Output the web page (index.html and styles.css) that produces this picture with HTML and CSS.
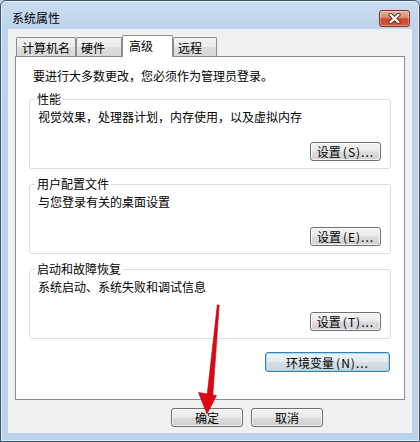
FILE: index.html
```html
<!DOCTYPE html>
<html lang="zh-CN">
<head>
<meta charset="utf-8">
<title>系统属性</title>
<link rel="stylesheet" href="styles.css">
</head>
<body>
<div class="window">
  <div class="titlebar">
    <span class="title">系统属性</span>
    <button class="close" aria-label="关闭">
      <svg width="13" height="11" viewBox="0 0 13 11">
        <path d="M2.5 1.8 L10.5 9.2 M10.5 1.8 L2.5 9.2" stroke="#6b2a1e" stroke-width="4" stroke-linecap="round" fill="none"/>
        <path d="M2.5 1.8 L10.5 9.2 M10.5 1.8 L2.5 9.2" stroke="#ffffff" stroke-width="2.2" stroke-linecap="round" fill="none"/>
      </svg>
    </button>
  </div>
  <div class="client">
    <div class="tabs">
      <div class="tab t1">计算机名</div>
      <div class="tab t2">硬件</div>
      <div class="tab selected">高级</div>
      <div class="tab t4">远程</div>
    </div>
    <div class="panel">
      <p class="intro">要进行大多数更改，您必须作为管理员登录。</p>
      <div class="group">
        <div class="legend">性能</div>
        <p class="desc">视觉效果，处理器计划，内存使用，以及虚拟内存</p>
        <div class="btnrow"><button class="btn btn-set">设置<span class="mn">(S)...</span></button></div>
      </div>
      <div class="group">
        <div class="legend">用户配置文件</div>
        <p class="desc">与您登录有关的桌面设置</p>
        <div class="btnrow"><button class="btn btn-set">设置<span class="mn">(E)...</span></button></div>
      </div>
      <div class="group">
        <div class="legend">启动和故障恢复</div>
        <p class="desc">系统启动、系统失败和调试信息</p>
        <div class="btnrow"><button class="btn btn-set">设置<span class="mn">(T)...</span></button></div>
      </div>
      <div class="envrow"><button class="btn btn-default btn-env">环境变量<span class="mn">(N)...</span></button></div>
    </div>
    <div class="dialog-buttons">
      <button class="btn btn-dlg">确定</button>
      <button class="btn btn-dlg">取消</button>
    </div>
  </div>
  <svg class="arrow" width="420" height="442" viewBox="0 0 420 442">
    <polygon points="217.3,305 219.2,305 212.6,398 206.8,398" fill="#e10612" stroke="#b3000a" stroke-width="0.6"/>
    <polygon points="198.5,392.5 216.5,395.5 207,414" fill="#e10612" stroke="#b3000a" stroke-width="0.6"/>
  </svg>
</div>
</body>
</html>
```

FILE: styles.css
```css
* { box-sizing: border-box; }

html, body {
  margin: 0;
  padding: 0;
  background: #bcd3ea;
}

body {
  font-family: "Noto Sans CJK SC", "Noto Sans", sans-serif;
  font-size: 12px;
  color: #000;
}

.window {
  position: relative;
  width: 420px;
  height: 442px;
  border: 1px solid #3f5369;
  border-radius: 6px 6px 0 0;
  padding: 0 7px 8px 7px;
  background: linear-gradient(to bottom, #c9dcf1 0px, #bed4ec 28px, #bcd2ea 100%);
  box-shadow: inset 0 0 0 1px rgba(255, 255, 255, 0.55);
}

.titlebar {
  height: 28px;
  padding: 6px 2px 0 4px;
  display: flex;
  align-items: center;
  justify-content: space-between;
}

.title {
  line-height: 14px;
  color: #000;
}

.close {
  width: 31px;
  height: 17px;
  margin-top: 1px;
  padding: 0;
  border: 1px solid #7b3326;
  border-radius: 3px;
  background: linear-gradient(to bottom, #eab1a3 0%, #dc8670 45%, #c9482d 52%, #d35a3c 100%);
  box-shadow: inset 0 0 0 1px rgba(255, 255, 255, 0.35);
  display: flex;
  align-items: center;
  justify-content: center;
}

.client {
  height: 404px;
  background: #f0f0f0;
  padding: 6px 7px 0 7px;
  display: flex;
  flex-direction: column;
}

.tabs {
  height: 22px;
  margin-bottom: -1px;
  padding-left: 1px;
  display: flex;
  align-items: flex-start;
  position: relative;
  z-index: 1;
}

.tab {
  height: 19px;
  margin-top: 2px;
  border: 1px solid #898c95;
  border-bottom: none;
  border-radius: 2px 2px 0 0;
  background: linear-gradient(to bottom, #f4f4f4 0%, #ececec 50%, #dedede 51%, #d8d8d8 100%);
  padding: 3px 0 0 5px;
  line-height: 14px;
  white-space: nowrap;
}

.t1 { width: 60px; }
.t2 { width: 46px; padding-left: 4px; }
.t4 { width: 44px; padding-left: 4px; }

.tab.selected {
  width: 51px;
  height: 22px;
  margin-top: 0;
  background: #fff;
  padding-left: 6px;
  padding-top: 3px;
}

.panel {
  height: 344px;
  background: #fff;
  border: 1px solid #898c95;
  padding: 12px 13px 0 13px;
  display: flex;
  flex-direction: column;
}

.intro {
  margin: 0 0 0 4px;
  line-height: 14px;
}

.group {
  height: 70px;
  margin-top: 15px;
  border: 1px solid #d5dfe5;
  border-radius: 3px;
  padding: 0 9px 0 8px;
  display: flex;
  flex-direction: column;
}

.intro + .group { margin-top: 16px; }

.legend {
  align-self: flex-start;
  margin: -8px 0 0 -3px;
  padding: 0 2px;
  background: #fff;
  line-height: 14px;
}

.desc {
  margin: 4px 0 0 0;
  line-height: 14px;
}

.btnrow {
  margin-top: 18px;
  display: flex;
  justify-content: flex-end;
}

.btn {
  height: 19px;
  padding: 0;
  border: 1px solid #707070;
  border-radius: 3px;
  background: linear-gradient(to bottom, #f2f2f2 0%, #ebebeb 48%, #dddddd 52%, #cfcfcf 100%);
  box-shadow: inset 0 0 0 1px rgba(255, 255, 255, 0.75);
  font-family: "Noto Sans CJK SC", "Noto Sans", sans-serif;
  font-size: 12px;
  line-height: 15px;
  color: #000;
  display: flex;
  align-items: center;
  justify-content: center;
}

.mn {
  letter-spacing: 1px;
  margin-left: 2px;
}

.btn-set { width: 71px; }

.envrow {
  margin-top: 13px;
  padding-right: 1px;
  display: flex;
  justify-content: flex-end;
}

.btn-env {
  width: 125px;
  height: 20px;
}

.btn-default {
  border-color: #3c7fb1;
  box-shadow: inset 0 0 0 1px rgba(140, 210, 240, 0.7);
  background: linear-gradient(to bottom, #eef4f8 0%, #e4ecf1 48%, #d5e0e7 52%, #c9d6de 100%);
}

.dialog-buttons {
  margin-top: 8px;
  padding-right: 82px;
  display: flex;
  justify-content: flex-end;
  gap: 8px;
}

.btn-dlg { width: 72px; }

.arrow {
  position: absolute;
  left: -1px;
  top: -1px;
  pointer-events: none;
}
```
